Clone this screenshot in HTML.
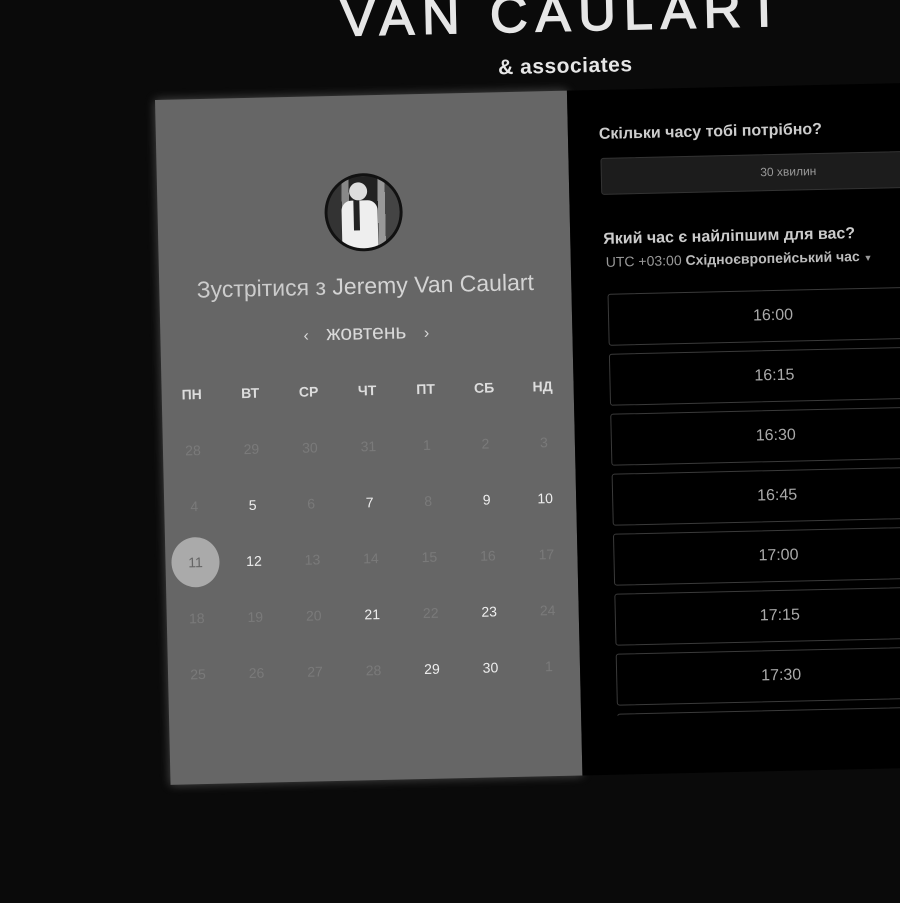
<!DOCTYPE html>
<html><head><meta charset="utf-8"><style>
html,body{margin:0;padding:0;width:900px;height:900px;overflow:hidden;background:#0a0a0a;font-family:"Liberation Sans","Noto Sans CJK SC",sans-serif}
#w{position:absolute;left:0;top:0;width:1200px;height:900px;transform-origin:155px 100px;transform:rotate(-1.3deg)}
.logo{position:absolute;left:262px;width:600px;text-align:center;color:#e6e6e6}
#left{position:absolute;left:155px;top:100px;width:412px;height:685px;background:#666;box-shadow:0 0 10px rgba(200,200,200,.35)}
#right{position:absolute;left:567px;top:100px;width:500px;height:685px;background:#000}
.c{position:absolute;transform:translate(-50%,-50%);white-space:nowrap}
.d{color:#7a7a7a;font-size:14px}
.b{color:#eee;font-size:14px}
.wd{color:#ddd;font-size:14px;font-weight:bold}
.slot{position:absolute;left:36px;width:330px;height:52px;border:1px solid #3a3a3a;border-radius:3px;box-sizing:border-box;color:#aaa;font-size:16px;text-align:center;line-height:50px}
</style></head><body>
<div id="w">
<div class="logo" style="top:-7px;left:266px;font-size:52px;letter-spacing:8px;line-height:60px;-webkit-text-stroke:1.5px #e6e6e6">VAN CAULART</div>
<div class="logo" style="top:64px;left:266px;font-size:21px;font-weight:bold;line-height:24px;letter-spacing:.5px">&amp; associates</div>
<div id="left">
 <div class="c" style="left:206px;top:117px;width:72px;height:72px;border-radius:50%;border:3px solid #111;overflow:hidden;background:linear-gradient(90deg,#333 0 20%,#888 20% 30%,#222 30% 70%,#999 70% 80%,#444 80%)">
  <div style="position:absolute;left:22px;top:6px;width:18px;height:18px;border-radius:50%;background:#ddd"></div>
  <div style="position:absolute;left:14px;top:24px;width:36px;height:50px;border-radius:10px 10px 0 0;background:#eee"></div>
  <div style="position:absolute;left:26px;top:24px;width:6px;height:30px;background:#222"></div>
 </div>
 <div class="c" style="left:206px;top:191px;font-size:23px;color:#ccc">Зустрітися з <span style="font-weight:300;color:#d4d4d4">Jeremy Van Caulart</span></div>
 <div class="c" style="left:206px;top:238px;font-size:21px;color:#d8d8d8"><span style="font-size:16px">‹</span>&nbsp;&nbsp; жовтень &nbsp;&nbsp;<span style="font-size:16px">›</span></div>
 <div id="cal"></div>
</div>
<div id="right">
 <div style="position:absolute;left:31px;top:36px;font-size:16px;font-weight:bold;color:#ccc">Скільки часу тобі потрібно?</div>
 <div style="position:absolute;left:32px;top:68px;width:400px;height:37px;background:#1c1c1c;border:1px solid #333;border-radius:3px;box-sizing:border-box;color:#999;font-size:12px;line-height:35px;text-align:center;text-indent:-25px">30 хвилин</div>
 <div style="position:absolute;left:33px;top:141px;font-size:16px;font-weight:bold;color:#ccc">Який час є найліпшим для вас?</div>
 <div style="position:absolute;left:35px;top:164px;font-size:14px;color:#999">UTC +03:00 <b style="color:#bbb">Східноєвропейський час</b> <span style="font-size:9px">▼</span></div>
 <div style="position:absolute;left:0;top:196px;width:500px;height:430px;overflow:hidden">
  <div class="slot" style="top:8px">16:00</div>
  <div class="slot" style="top:68px">16:15</div>
  <div class="slot" style="top:128px">16:30</div>
  <div class="slot" style="top:188px">16:45</div>
  <div class="slot" style="top:248px">17:00</div>
  <div class="slot" style="top:308px">17:15</div>
  <div class="slot" style="top:368px">17:30</div>
  <div class="slot" style="top:428px">17:45</div>
 </div>
</div>
</div>
<script>
var cal=document.getElementById('cal'),h='';
var wd=['ПН','ВТ','СР','ЧТ','ПТ','СБ','НД'];
for(var i=0;i<7;i++)h+='<div class="c wd" style="left:'+(30+i*58.5)+'px;top:295px">'+wd[i]+'</div>';
var rows=[[28,29,30,31,1,2,3],[4,5,6,7,8,9,10],[11,12,13,14,15,16,17],[18,19,20,21,22,23,24],[25,26,27,28,29,30,1]];
var br={'1-1':1,'1-3':1,'1-5':1,'1-6':1,'2-1':1,'3-3':1,'3-5':1,'4-4':1,'4-5':1};
for(var r=0;r<5;r++)for(var i=0;i<7;i++){var x=30+i*58.5,y=351+r*56;
 if(r==2&&i==0){h+='<div class="c" style="left:'+x+'px;top:'+y+'px;width:48px;height:50px;border-radius:50%;background:#aaa"></div><div class="c" style="left:'+x+'px;top:'+y+'px;color:#666;font-size:14px">11</div>';continue;}
 h+='<div class="c '+(br[r+'-'+i]?'b':'d')+'" style="left:'+x+'px;top:'+y+'px">'+rows[r][i]+'</div>';}
cal.innerHTML=h;
</script>
</body></html>
